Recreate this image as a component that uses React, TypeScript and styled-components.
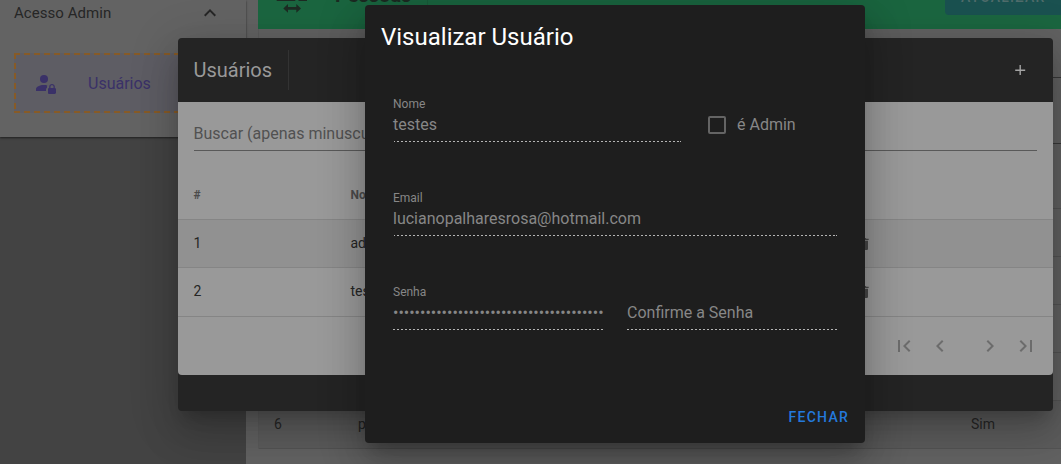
import React from "react";
import styled, { createGlobalStyle } from "styled-components";
import { MdFirstPage, MdLastPage, MdChevronLeft, MdChevronRight, MdDelete, MdKeyboardArrowUp } from "react-icons/md";

const GlobalStyle = createGlobalStyle`
  * { box-sizing: border-box; }
  body { margin: 0; overflow: hidden; background: #626262; font-family: Roboto, sans-serif; font-size: 16px; }
`;

const elevation = `0 11px 15px -7px rgba(0,0,0,.2), 0 24px 38px 3px rgba(0,0,0,.14), 0 9px 46px 8px rgba(0,0,0,.12)`;

const Page = styled.div`
  position: relative;
  display: flex;
  width: 1061px;
  height: 464px;
  overflow: hidden;
`;

const Sidebar = styled.aside`
  width: 246px;
  background: #434343;
`;

const Menu = styled.div`
  height: 137px;
  background: #636363;
  padding: 0 14px;
  box-shadow: 0 1px 2px rgba(0, 0, 0, 0.55);
`;

const MenuHeader = styled.div`
  display: flex;
  align-items: center;
  justify-content: space-between;
  height: 26px;
  padding-right: 10px;
  margin-bottom: 27px;
  color: #262626;
  font-size: 15px;
  letter-spacing: 0.05px;
`;

const dash = "#875b27 0 6px, transparent 6px 10px";

const MenuItem = styled.div`
  display: flex;
  align-items: center;
  gap: 30px;
  height: 60px;
  padding-left: 20px;
  background:
    repeating-linear-gradient(90deg, ${dash}) 0 0 / 100% 2px no-repeat,
    repeating-linear-gradient(90deg, ${dash}) 0 100% / 100% 2px no-repeat,
    repeating-linear-gradient(180deg, ${dash}) 0 0 / 2px 100% no-repeat,
    repeating-linear-gradient(180deg, ${dash}) 100% 0 / 2px 100% no-repeat,
    #5e5d64;
  color: #3a3168;
`;

const Content = styled.main`
  flex: 1;
  padding-left: 12px;
`;

const PeopleBar = styled.div`
  display: flex;
  justify-content: space-between;
  height: 29px;
  padding-left: 16px;
  background: #1b6640;
  color: #1d2b23;
`;

const PeopleTitle = styled.div`
  display: flex;
  gap: 25px;
  width: 154px;
  height: 60px;
  margin-top: -20px;
  border-right: 1px solid #1a5c3a;
  font-size: 20px;
  font-weight: 700;
  line-height: 30px;
`;

const UpdateButton = styled.div`
  width: 116px;
  height: 36px;
  margin-top: -21px;
  padding-left: 16px;
  border-radius: 4px 0 0 4px;
  background: #1a5150;
  color: #506c6b;
  font-size: 14px;
  font-weight: 500;
  line-height: 36px;
  letter-spacing: 1.25px;
`;

const PeopleTable = styled.div`
  border-left: 1px solid #5b5b5b;
`;

const PeopleRow = styled.div<{ $h: number; $line?: string; $shade?: boolean }>`
  display: grid;
  grid-template-columns: 84px 613px 1fr;
  align-items: center;
  height: ${(p) => p.$h}px;
  padding: 0 0 2px 15px;
  border-bottom: 1px solid ${(p) => p.$line || "#545454"};
  background: ${(p) => (p.$shade ? "#5d5d5d" : "transparent")};
  color: #262626;
  font-size: 14px;
`;

const UsersDialog = styled.section`
  position: absolute;
  left: 178px;
  top: 38px;
  width: 875px;
  height: 373px;
  border-radius: 4px;
  overflow: hidden;
  background: #242424;
  box-shadow: ${elevation};
`;

const UsersHeader = styled.header`
  display: flex;
  align-items: center;
  height: 64px;
  padding: 0 26px 0 15.5px;
  color: #999;
`;

const UsersTitle = styled.div`
  width: 95.5px;
  height: 40px;
  border-right: 1px solid #333;
  font-size: 20px;
  line-height: 40px;
`;

const AddIcon = styled.svg`
  margin-left: auto;
`;

const UsersBody = styled.div`
  height: 273px;
  background: #999;
  border-radius: 0 0 4px 4px;
`;

const Search = styled.div`
  height: 49px;
  margin: 0 16px 21px 15.5px;
  padding-top: 22px;
  border-bottom: 1px solid #595959;
  color: #515151;
  line-height: 20px;
`;

const UserRow = styled.div<{ $head?: boolean; $hover?: boolean; $last?: boolean }>`
  display: grid;
  grid-template-columns: 157px 505.800px 1fr;
  align-items: center;
  height: 48px;
  padding-left: 15.5px;
  border-bottom: ${(p) => (p.$last ? 0 : 1)}px solid #858585;
  background: ${(p) => (p.$hover ? "#919191" : "transparent")};
  color: ${(p) => (p.$head ? "#4b4b4b" : "#252525")};
  font-size: ${(p) => (p.$head ? 12 : 14)}px;
  font-weight: ${(p) => (p.$head ? 700 : 400)};
  span { padding-bottom: 2px; }
  svg { color: #474747; }
`;

const Pager = styled.div`
  display: flex;
  justify-content: flex-end;
  align-items: center;
  height: 59px;
  padding-right: 15px;
  border-top: 1px solid #858585;
  color: #6c6c6c;
`;

const PagerGroup = styled.div`
  display: flex;
  gap: 12px;
  & + & { margin-left: 26px; }
`;

const ViewDialog = styled.section`
  position: absolute;
  left: 365px;
  top: 5px;
  width: 500px;
  height: 438px;
  padding: 0 28px;
  border-radius: 4px;
  background: #1e1e1e;
  box-shadow: ${elevation};
  color: #878787;
`;

const DialogTitle = styled.h1`
  margin: 0 -12px;
  height: 90px;
  padding-top: 16px;
  color: #fff;
  font-size: 24px;
  font-weight: 400;
  line-height: 32px;
`;

const FieldRow = styled.div`
  display: flex;
  gap: 24px;
  height: 94px;
`;

const Field = styled.div<{ $w: number }>`
  display: flex;
  flex-direction: column;
  width: ${(p) => p.$w}px;
  height: 47px;
  &::after {
    content: "";
    margin-top: auto;
    border-style: solid;
    border-width: 1px 0 0;
    border-image: repeating-linear-gradient(to right, #b4b4b4 0, #b4b4b4 2px, transparent 2px, transparent 4px) 1 repeat;
  }
`;

const Label = styled.div`
  height: 20px;
  padding-top: 1px;
  font-size: 12px;
  line-height: 16px;
`;

const Value = styled.div`
  line-height: 20px;
  white-space: nowrap;
`;

const CheckOption = styled.div`
  display: flex;
  align-items: center;
  gap: 11px;
  height: 20px;
  margin: 20px 0 0 3px;
`;

const CheckLabel = styled.span`
  padding-bottom: 2px;
`;

const CheckBox = styled.span`
  width: 18px;
  height: 18px;
  border: 2px solid #646464;
  border-radius: 2px;
`;

const CloseButton = styled.button`
  display: block;
  margin: 30px -12px 0 auto;
  padding: 0;
  border: 0;
  background: none;
  color: #2479dc;
  font: 500 14px/20px Roboto, sans-serif;
  letter-spacing: 1.25px;
`;

const AccountLock = () => (
  <svg width="24" height="24" viewBox="0 0 24 24" fill="currentColor">
    <circle cx="10" cy="8" r="4" />
    <path d="M2 20v-2c0-2.2 3.6-4 8-4 1.2 0 2.3.1 3.3.4-.2.5-.3 1-.3 1.6v.4c-.6.5-1 1.3-1 2.1V20z" />
    <path d="M20.8 17v-1.5c0-1.4-1.4-2.5-2.8-2.5s-2.8 1.1-2.8 2.5V17c-.6 0-1.2.6-1.2 1.2v3.5c0 .7.6 1.3 1.2 1.3h5.5c.7 0 1.3-.6 1.3-1.2v-3.5c0-.7-.6-1.3-1.2-1.3m-1.3 0h-3v-1.5c0-.8.7-1.3 1.5-1.3s1.5.5 1.5 1.3z" />
  </svg>
);

const AccountSwitch = () => (
  <svg width="36" height="36" viewBox="0 0 36 36" fill="currentColor">
    <path d="M2.7 21v-3c0-3 4-4.500 9.300-4.500s9.300 1.500 9.300 4.500v3zM24.500 21v-3c0-2-1-3.500-2.500-4.500 6 0 11 1.500 11 4.500v3z" />
    <path d="M9.300 28.400l4.700-4.400v3h8.300v-3l4.700 4.400-4.700 4.400v-3h-8.300v3z" />
  </svg>
);

export default function App() {
  return (
    <Page>
      <GlobalStyle />
      <Sidebar>
        <Menu>
          <MenuHeader>
            Acesso Admin
            <MdKeyboardArrowUp size={24} />
          </MenuHeader>
          <MenuItem>
            <AccountLock />
            Usuários
          </MenuItem>
        </Menu>
      </Sidebar>
      <Content>
        <PeopleBar>
          <PeopleTitle>
            <AccountSwitch />
            Pessoas
          </PeopleTitle>
          <UpdateButton>ATUALIZAR</UpdateButton>
        </PeopleBar>
        <PeopleTable>
          <PeopleRow $h={49} $line="#383838" />
          <PeopleRow $h={66} $line="#383838" />
          <PeopleRow $h={65} />
          <PeopleRow $h={48} />
          <PeopleRow $h={48} />
          <PeopleRow $h={48} />
          <PeopleRow $h={48} />
          <PeopleRow $h={48} $shade>
            <span>6</span>
            <span>p</span>
            <span>Sim</span>
          </PeopleRow>
        </PeopleTable>
      </Content>

      <UsersDialog>
        <UsersHeader>
          <UsersTitle>Usuários</UsersTitle>
          <AddIcon width="14" height="14" viewBox="0 0 14 14" stroke="#a4a4a4" strokeWidth="1.4">
            <path d="M7.200 2v10M2.200 7.200h10" />
          </AddIcon>
        </UsersHeader>
        <UsersBody>
          <Search>Buscar (apenas minusculas)</Search>
          <UserRow $head>
            <span>#</span>
            <span>Nome</span>
          </UserRow>
          <UserRow $hover>
            <span>1</span>
            <span>admin</span>
            <MdDelete size={16} />
          </UserRow>
          <UserRow $last>
            <span>2</span>
            <span>testes</span>
            <MdDelete size={16} />
          </UserRow>
          <Pager>
            <PagerGroup>
              <MdFirstPage size={24} />
              <MdChevronLeft size={24} />
            </PagerGroup>
            <PagerGroup>
              <MdChevronRight size={24} />
              <MdLastPage size={24} />
            </PagerGroup>
          </Pager>
        </UsersBody>
      </UsersDialog>

      <ViewDialog>
        <DialogTitle>Visualizar Usuário</DialogTitle>
        <FieldRow>
          <Field $w={288}>
            <Label>Nome</Label>
            <Value>testes</Value>
          </Field>
          <CheckOption>
            <CheckBox />
            <CheckLabel>é Admin</CheckLabel>
          </CheckOption>
        </FieldRow>
        <FieldRow>
          <Field $w={444}>
            <Label>Email</Label>
            <Value>lucianopalharesrosa@hotmail.com</Value>
          </Field>
        </FieldRow>
        <FieldRow>
          <Field $w={210}>
            <Label>Senha</Label>
            <Value>{"•".repeat(39)}</Value>
          </Field>
          <Field $w={210}>
            <Label />
            <Value>Confirme a Senha</Value>
          </Field>
        </FieldRow>
        <CloseButton>FECHAR</CloseButton>
      </ViewDialog>
    </Page>
  );
}
